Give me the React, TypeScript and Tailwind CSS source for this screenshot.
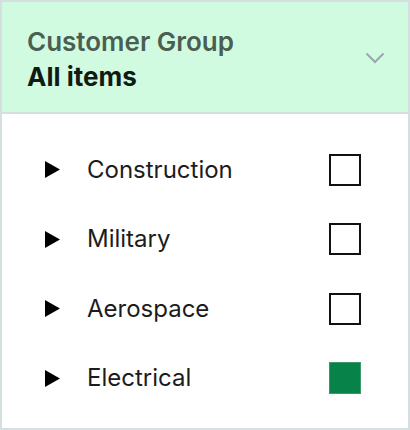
const groups = [
  { name: "Construction", checked: false },
  { name: "Military", checked: false },
  { name: "Aerospace", checked: false },
  { name: "Electrical", checked: true },
]

export default function App() {
  return (
    <div className="w-[410px] h-[430px] border-2 border-[#d5dfe2] bg-white flex flex-col" style={{ fontFamily: "Inter, 'Noto Sans', sans-serif" }}>
      {/* Header */}
      <div className="h-[112px] bg-[#d1fbe0] border-b-2 border-[#d5dfe2] flex items-center justify-between pl-[25px] pr-[23px]">
        <div className="flex flex-col leading-[35px] pt-[4px]">
          <span className="text-[26px] font-semibold text-[#4b5e52]">Customer Group</span>
          <span className="text-[26px] font-bold text-[#111a14]">All items</span>
        </div>
        <svg width="20" height="12" viewBox="0 0 20 12" className="mt-[2px]">
          <path d="M1.5 1.5 L10 10 L18.5 1.5" fill="none" stroke="#9aa6b0" strokeWidth="2" />
        </svg>
      </div>

      {/* Options */}
      <div className="flex flex-col pt-[21px] pl-[43px] pr-[47px]">
        {groups.map((g) => (
          <div key={g.name} className="h-[69.5px] flex items-center justify-between">
            <div className="flex items-center gap-[27px]">
              <svg width="15" height="17" viewBox="0 0 15 17" className="shrink-0">
                <path d="M0 0 L15 8.5 L0 17 Z" fill="#000" />
              </svg>
              <span className="text-[24px] text-[#1c1c1c]">{g.name}</span>
            </div>
            <div
              className={
                g.checked
                  ? "w-[32px] h-[32px] bg-[#07834a] border border-[#3a9a6a]"
                  : "w-[32px] h-[32px] border-2 border-[#111]"
              }
            />
          </div>
        ))}
      </div>
    </div>
  )
}
